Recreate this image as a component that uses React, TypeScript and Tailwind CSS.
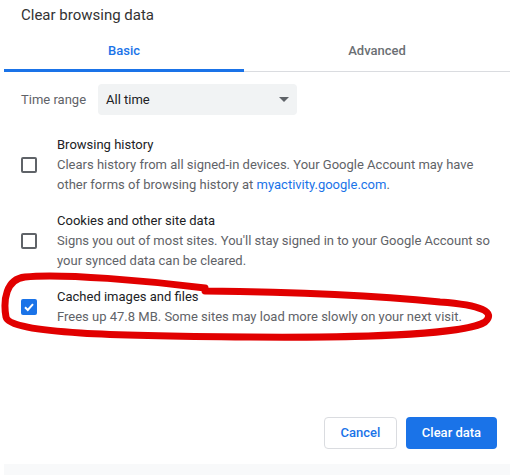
import React from "react";

function Checkbox({ checked }: { checked?: boolean }) {
  if (checked) {
    return (
      <div className="w-[16px] h-[16px] rounded-[2px] bg-[#1a73e8] flex items-center justify-center shrink-0">
        <svg width="12" height="12" viewBox="0 0 12 12">
          <path d="M2 6.2 L4.8 9 L10 3.2" fill="none" stroke="white" strokeWidth="2" />
        </svg>
      </div>
    );
  }
  return <div className="w-[16px] h-[16px] rounded-[2px] border-2 border-[#5f6368] shrink-0" />;
}

function Item({
  title,
  children,
  checked,
  mt,
}: {
  title: string;
  children: React.ReactNode;
  checked?: boolean;
  mt: string;
}) {
  return (
    <div className={`flex items-center ${mt}`}>
      <div className="w-[57px] pl-[21px] flex">
        <Checkbox checked={checked} />
      </div>
      <div className="flex flex-col text-[13px] leading-[20px]">
        <div className="text-[#202124]">{title}</div>
        <div className="text-[#5f6368]">{children}</div>
      </div>
    </div>
  );
}

export default function App() {
  return (
    <div
      className="relative w-[510px] h-[475px] bg-white overflow-hidden flex flex-col"
      style={{ fontFamily: "Roboto, 'Liberation Sans', sans-serif" }}
    >
      <div className="pl-[21px] pt-[5px] h-[30px] text-[15px] leading-[20px] text-[#333]">
        Clear browsing data
      </div>
      <div className="ml-[4px] flex border-b border-[#dadce0] h-[42px]">
        <div className="w-[240px] relative flex items-center justify-center text-[13px] font-medium text-[#1a73e8] pt-[1px]">
          Basic
          <div className="absolute left-0 right-0 bottom-[-1px] h-[3px] bg-[#1a73e8]" />
        </div>
        <div className="flex-1 flex items-center justify-center text-[13px] font-medium text-[#6b6f74] pt-[1px]">
          Advanced
        </div>
      </div>
      <div className="mt-[12px] flex items-center h-[31px]">
        <div className="pl-[21px] w-[98px] text-[13px] text-[#5f6368]">Time range</div>
        <div className="w-[199px] h-[31px] rounded-[4px] bg-[#f1f3f4] flex items-center justify-between pl-[8px] pr-[8px] text-[13px] text-[#202124]">
          <span>All time</span>
          <svg width="10" height="5" viewBox="0 0 10 5">
            <path d="M0 0 L10 0 L5 5 Z" fill="#5f6368" />
          </svg>
        </div>
      </div>
      <Item title="Browsing history" mt="mt-[20px]">
        Clears history from all signed-in devices. Your Google Account may have
        <br />
        other forms of browsing history at{" "}
        <span className="text-[#1a73e8]">myactivity.google.com</span>.
      </Item>
      <Item title="Cookies and other site data" mt="mt-[16px]">
        Signs you out of most sites. You'll stay signed in to your Google Account so
        <br />
        your synced data can be cleared.
      </Item>
      <Item title="Cached images and files" checked mt="mt-[16px]">
        Frees up 47.8 MB. Some sites may load more slowly on your next visit.
      </Item>
      <div className="mt-[90px] flex justify-end gap-[9px] pr-[13px]">
        <button className="w-[73px] h-[32px] rounded-[4px] border border-[#dadce0] bg-white text-[13px] font-medium text-[#1a73e8]">
          Cancel
        </button>
        <button className="w-[91px] h-[32px] rounded-[4px] bg-[#1a73e8] text-[13px] font-medium text-white">
          Clear data
        </button>
      </div>
      <div className="absolute left-[4px] right-0 bottom-0 h-[11px] bg-[#f8f9fa]" />
      <svg className="absolute left-0 top-0 pointer-events-none" width="510" height="475" viewBox="0 0 510 475">
        <path
          d="M205 288 C150 281, 60 273, 25 277 C6 279, 3 300, 6 317 C10 334, 120 336, 250 337 C380 338, 468 333, 485 322 C496 312, 482 305, 440 302 C380 296, 290 292, 205 291"
          fill="none"
          stroke="#e10000"
          strokeWidth="7"
          strokeLinecap="round"
          strokeLinejoin="round"
        />
      </svg>
    </div>
  );
}
